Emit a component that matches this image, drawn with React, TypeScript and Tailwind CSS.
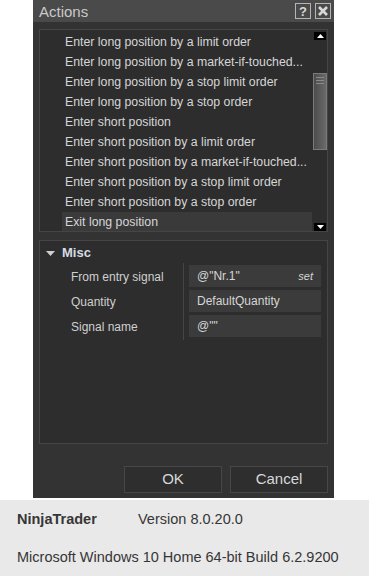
import React from 'react';

const actions = [
  'Enter long position by a limit order',
  'Enter long position by a market-if-touched...',
  'Enter long position by a stop limit order',
  'Enter long position by a stop order',
  'Enter short position',
  'Enter short position by a limit order',
  'Enter short position by a market-if-touched...',
  'Enter short position by a stop limit order',
  'Enter short position by a stop order',
  'Exit long position',
];

function ArrowBox({ up }: { up?: boolean }) {
  return (
    <div className="ml-[1px] flex h-[8px] w-[12px] items-center justify-center bg-black">
      <svg width="7" height="4" viewBox="0 0 7 4">
        {up ? <path d="M0 4 L3.5 0 L7 4 Z" fill="#fff" /> : <path d="M0 0 L7 0 L3.5 4 Z" fill="#fff" />}
      </svg>
    </div>
  );
}

function App() {
  return (
    <div className="flex h-[576px] w-[369px] flex-col bg-white font-['Liberation_Sans',Arial,sans-serif]">
      <div className="h-[500px] shrink-0">
        <div className="ml-[33px] flex h-[498px] w-[301px] flex-col bg-[#333333]">
          {/* title bar */}
          <div className="flex h-[22px] shrink-0 items-center bg-[#4a4a4a] pl-[6px] pr-[3px]">
            <span className="text-[15px] leading-none text-[#c9c9c9]">Actions</span>
            <div className="ml-auto flex gap-[4px]">
              <div className="flex h-[16px] w-[16px] items-center justify-center border border-[#b5b5b5] text-[13px] font-bold leading-none text-[#d8d8d8]">
                ?
              </div>
              <div className="flex h-[16px] w-[16px] items-center justify-center border border-[#b5b5b5]">
                <svg width="10" height="10" viewBox="0 0 10 10">
                  <path d="M1 1 L9 9 M9 1 L1 9" stroke="#d8d8d8" strokeWidth="2.6" />
                </svg>
              </div>
            </div>
          </div>

          {/* actions list */}
          <div className="mx-[6px] mt-[7px] flex h-[203px] shrink-0 overflow-hidden border border-[#454545] bg-[#2d2d2d]">
            <div className="flex flex-1 flex-col pt-[2px]">
              {actions.map((a, i) => (
                <div
                  key={a}
                  className={`ml-[22px] mr-[1px] flex h-[20px] shrink-0 items-center pl-[3px] text-[12.3px] text-[#d6d6d6] ${
                    i === actions.length - 1 ? 'bg-[#3a3a3a]' : ''
                  }`}
                >
                  {a}
                </div>
              ))}
            </div>
            <div className="flex w-[14px] flex-col">
              <div className="mt-[2px]">
                <ArrowBox up />
              </div>
              <div className="mt-[33px] flex h-[77px] flex-col gap-[2px] border border-[#7a7a7a] bg-gradient-to-r from-[#4c4c4c] to-[#6a6a6a] px-[2px] pt-[3px]">
                <div className="h-[1px] bg-[#8a8a8a]" />
                <div className="h-[1px] bg-[#8a8a8a]" />
                <div className="h-[1px] bg-[#8a8a8a]" />
              </div>
              <div className="mt-[73px]">
                <ArrowBox />
              </div>
            </div>
          </div>

          {/* properties */}
          <div className="mx-[6px] mt-[8px] flex h-[204px] shrink-0 flex-col border border-[#454545] bg-[#2d2d2d]">
            <div className="flex h-[22px] items-center pl-[6px] pt-[2px]">
              <svg width="9" height="5" viewBox="0 0 9 5">
                <path d="M0 0 L9 0 L4.5 5 Z" fill="#cfcfcf" />
              </svg>
              <span className="ml-[7px] text-[13px] font-bold text-[#d4dce6]">Misc</span>
            </div>
            <div className="flex">
              <div className="flex w-[143px] flex-col gap-[3px] pt-[3px]">
                {['From entry signal', 'Quantity', 'Signal name'].map((l) => (
                  <div key={l} className="flex h-[22px] items-center pl-[31px] text-[12px] text-[#d0d0d0]">
                    {l}
                  </div>
                ))}
              </div>
              <div className="flex flex-col gap-[3px] border-l border-[#454545] pb-[3px] pl-[5px] pt-[2px]">
                <div className="flex h-[22px] w-[132px] items-center bg-[#3b3b3b] px-[8px] text-[12px] text-[#d6d6d6]">
                  <span>@"Nr.1"</span>
                  <span className="ml-auto italic text-[11px]">set</span>
                </div>
                <div className="flex h-[22px] w-[132px] items-center bg-[#3b3b3b] px-[8px] text-[12px] text-[#d6d6d6]">
                  DefaultQuantity
                </div>
                <div className="flex h-[22px] w-[132px] items-center bg-[#3b3b3b] px-[8px] text-[12px] text-[#d6d6d6]">
                  @""
                </div>
              </div>
            </div>
          </div>

          {/* buttons */}
          <div className="mt-[22px] flex justify-end gap-[8px] pr-[6px]">
            <button className="h-[27px] w-[98px] border border-[#474747] bg-[#2e2e2e] text-[15px] text-[#d8d8d8]">
              OK
            </button>
            <button className="h-[27px] w-[98px] border border-[#474747] bg-[#2e2e2e] text-[15px] text-[#d8d8d8]">
              Cancel
            </button>
          </div>
        </div>
      </div>

      {/* footer */}
      <div className="flex flex-1 flex-col bg-[#e9e9e9] pl-[17px] text-[14.5px] text-[#363636]">
        <div className="mt-[11px] flex h-[18px] items-center">
          <span className="w-[121px] font-bold">NinjaTrader</span>
          <span>Version 8.0.20.0</span>
        </div>
        <div className="mt-[20px] flex h-[18px] items-center">Microsoft Windows 10 Home 64-bit Build 6.2.9200</div>
      </div>
    </div>
  );
}

export default App;
